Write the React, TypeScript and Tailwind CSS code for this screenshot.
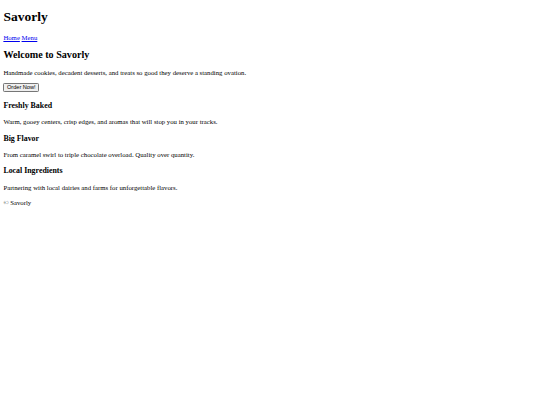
const features = [
  {
    title: 'Freshly Baked',
    text: 'Warm, gooey centers, crisp edges, and aromas that will stop you in your tracks.',
  },
  {
    title: 'Big Flavor',
    text: 'From caramel swirl to triple chocolate overload. Quality over quantity.',
  },
  {
    title: 'Local Ingredients',
    text: 'Partnering with local dairies and farms for unforgettable flavors.',
  },
];

export default function App() {
  return (
    <div className="[zoom:0.421875] bg-white text-black">
      <div className="m-2 font-['Liberation_Serif','Times_New_Roman',serif] text-[16px] leading-[normal]">
        <header>
          <h1 className="my-[21.44px] text-[32px] font-bold">Savorly</h1>
          <nav>
            <a href="#" className="text-[#0000ee] underline">
              Home
            </a>{' '}
            <a href="#" className="text-[#0000ee] underline">
              Menu
            </a>
          </nav>
        </header>

        <main>
          <section>
            <h2 className="my-[19.92px] text-[24px] font-bold">Welcome to Savorly</h2>
            <p className="my-4">
              Handmade cookies, decadent desserts, and treats so good they deserve a standing ovation.
            </p>
            <button className="rounded-[3px] border border-[#767676] bg-[#efefef] px-[6px] py-[2px] font-['Liberation_Sans',Arial,sans-serif] text-[13.333px] leading-[normal] text-black">
              Order Now!
            </button>
          </section>

          <section>
            {features.map((f) => (
              <div key={f.title}>
                <h3 className="my-[20px] text-[18.72px] font-bold">{f.title}</h3>
                <p className="my-4">{f.text}</p>
              </div>
            ))}
          </section>
        </main>

        <footer>
          <p className="mt-[18.5px] mb-4">© Savorly</p>
        </footer>
      </div>
    </div>
  );
}
